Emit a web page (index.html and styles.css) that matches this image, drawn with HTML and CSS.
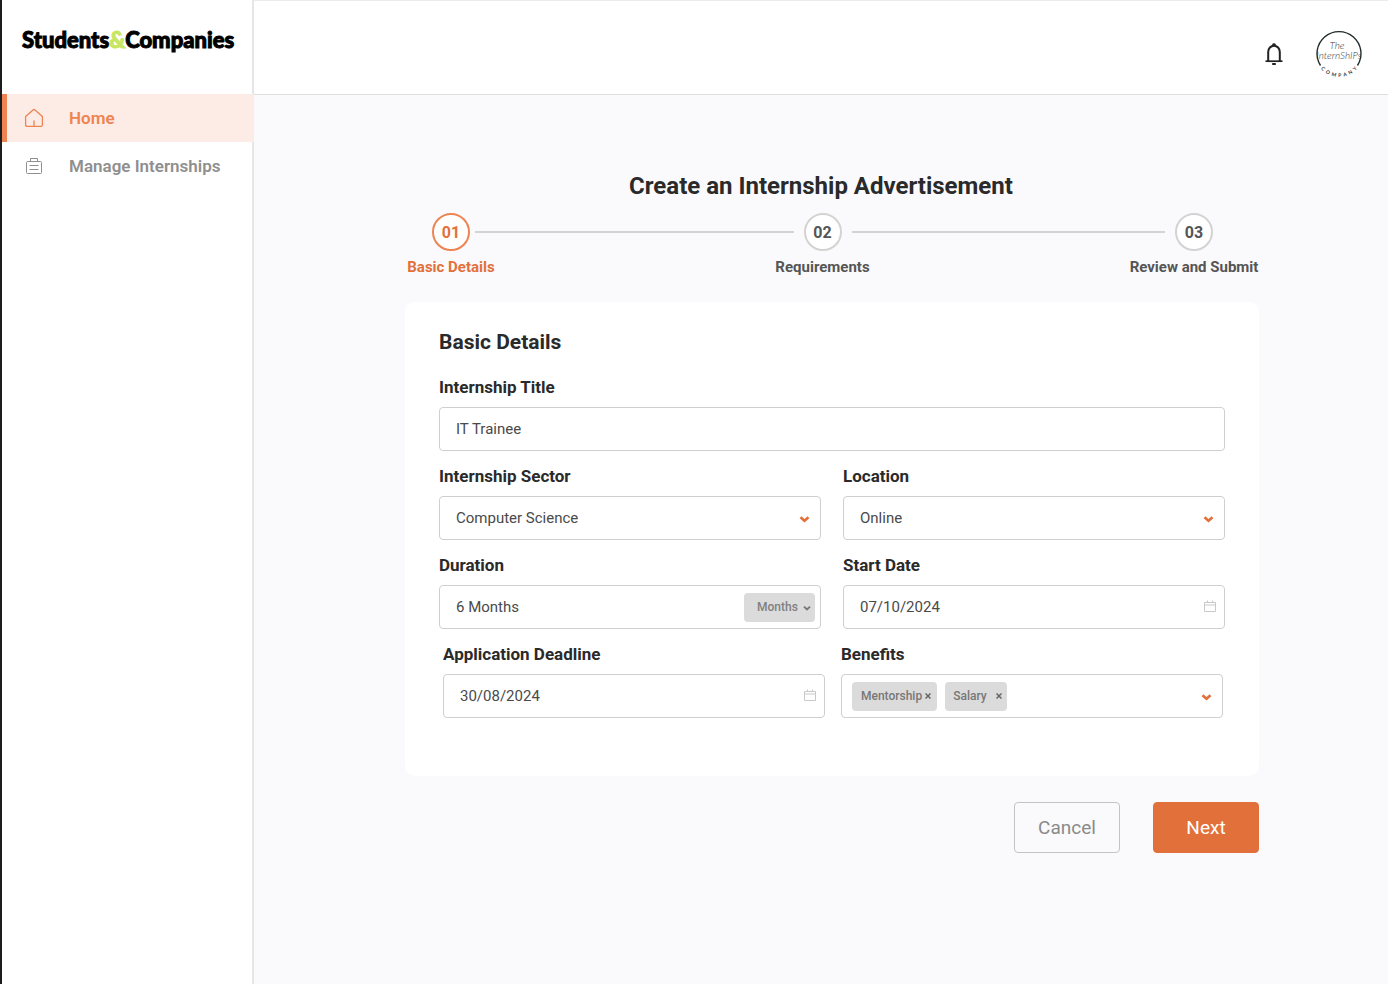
FILE: index.html
```html
<!DOCTYPE html>
<html lang="en">
<head>
<meta charset="utf-8">
<meta name="viewport" content="width=device-width, initial-scale=1">
<title>Create an Internship Advertisement</title>
<link rel="stylesheet" href="styles.css">
</head>
<body>
<div class="app">
  <aside class="sidebar">
    <a class="brand" href="#">Students<span class="brand-amp">&amp;</span>Companies</a>
    <nav class="nav">
      <a class="nav-item nav-item-active" href="#">
        <svg class="nav-icon" viewBox="0 0 20 20" fill="none" stroke="currentColor" stroke-width="1.3" stroke-linejoin="round" stroke-linecap="round"><path d="M1.600 8.600 9 1.900q1-.8 2 0l7.400 6.700v8.200q0 1.600-1.600 1.600H3.200q-1.600 0-1.600-1.600z"/><path d="M10 18v-5"/></svg>
        <span>Home</span>
      </a>
      <a class="nav-item" href="#">
        <svg class="nav-icon" viewBox="0 0 20 20" fill="none" stroke="currentColor" stroke-width="1"><rect x="2.5" y="5.5" width="15" height="12" rx="1"/><path d="M6.500 5.500v-3h7v3M5.500 9.500h9M5.500 13.500h9"/></svg>
        <span>Manage Internships</span>
      </a>
    </nav>
  </aside>
  <div class="page">
    <header class="topbar">
      <button class="icon-button" type="button" aria-label="Notifications">
        <svg width="20" height="24" viewBox="0 0 20 24" fill="none" stroke="#222" stroke-width="2"><path d="M4.200 19V10a5.800 6.300 0 0 1 11.600 0v9"/><path d="M1.500 19.200h17" stroke-width="1.700"/><path d="M8.200 22h3.600M8.800 3a1.300 1.300 0 0 1 2.400 0" stroke-width="1.800"/></svg>
      </button>
      <button class="icon-button" type="button" aria-label="The InternShIPs Company account">
        <svg class="avatar" width="50" height="50" viewBox="0 0 50 50">
          <path d="M6.500 36.500A22 22 0 1 1 43.500 36.500" fill="none" stroke="#222b2b" stroke-width="1.400"/>
          <path id="ring" d="M1 24A24 24 0 0 0 49 24" fill="none"/>
          <text class="avatar-script" x="23" y="20" text-anchor="middle">The</text>
          <text class="avatar-script" x="25" y="30" text-anchor="middle">InternShIPs</text>
          <text class="avatar-ring"><textPath href="#ring" startOffset="50%" text-anchor="middle">C&ensp;O&ensp;M&ensp;P&ensp;A&ensp;N&ensp;Y</textPath></text>
        </svg>
      </button>
    </header>
    <main class="main">
      <h1 class="title">Create an Internship Advertisement</h1>
      <form class="wizard">
        <ol class="steps">
          <li class="step step-active"><span class="step-number">01</span><span class="step-label">Basic Details</span></li>
          <li class="step-line" role="presentation"></li>
          <li class="step"><span class="step-number">02</span><span class="step-label">Requirements</span></li>
          <li class="step-line" role="presentation"></li>
          <li class="step"><span class="step-number">03</span><span class="step-label">Review and Submit</span></li>
        </ol>
        <section class="card">
          <h2 class="card-title">Basic Details</h2>
          <div class="row">
            <div class="field">
              <label class="label" for="title">Internship Title</label>
              <div class="control"><input class="input" id="title" type="text" value="IT Trainee"></div>
            </div>
          </div>
          <div class="row">
            <div class="field">
              <label class="label" for="sector">Internship Sector</label>
              <div class="control">
                <select class="input" id="sector"><option>Computer Science</option></select>
                <svg class="chevron" viewBox="0 0 10 8"><path d="M1 2.200 5 5.800 9 2.200"/></svg>
              </div>
            </div>
            <div class="field">
              <label class="label" for="location">Location</label>
              <div class="control">
                <select class="input" id="location"><option>Online</option></select>
                <svg class="chevron" viewBox="0 0 10 8"><path d="M1 2.200 5 5.800 9 2.200"/></svg>
              </div>
            </div>
          </div>
          <div class="row">
            <div class="field">
              <label class="label" for="duration">Duration</label>
              <div class="control">
                <input class="input" id="duration" type="text" value="6 Months">
                <div class="unit">
                  <select class="unit-select" aria-label="Duration unit"><option>Months</option></select>
                  <svg class="unit-chevron" viewBox="0 0 10 8"><path d="M1 2.200 5 5.800 9 2.200"/></svg>
                </div>
              </div>
            </div>
            <div class="field">
              <label class="label" for="start">Start Date</label>
              <div class="control">
                <input class="input" id="start" type="text" value="07/10/2024">
                <svg class="calendar" viewBox="0 0 12 12"><path d="M.5 2.500h11v9H.5zM.5 5h11M3.500.5v2M8.500.5v2"/></svg>
              </div>
            </div>
          </div>
          <div class="row row-inset">
            <div class="field">
              <label class="label" for="deadline">Application Deadline</label>
              <div class="control">
                <input class="input" id="deadline" type="text" value="30/08/2024">
                <svg class="calendar" viewBox="0 0 12 12"><path d="M.5 2.500h11v9H.5zM.5 5h11M3.500.5v2M8.500.5v2"/></svg>
              </div>
            </div>
            <div class="field">
              <span class="label" id="benefits">Benefits</span>
              <div class="control tags" role="group" aria-labelledby="benefits">
                <span class="tag">Mentorship<button class="tag-remove" type="button" aria-label="Remove Mentorship"><svg viewBox="0 0 6 6"><path d="M.5.5l5 5M5.500.5l-5 5"/></svg></button></span>
                <span class="tag tag-wide">Salary<button class="tag-remove" type="button" aria-label="Remove Salary"><svg viewBox="0 0 6 6"><path d="M.5.5l5 5M5.500.5l-5 5"/></svg></button></span>
                <button class="tags-toggle" type="button" aria-label="Show benefits"><svg class="chevron" viewBox="0 0 10 8"><path d="M1 2.200 5 5.800 9 2.200"/></svg></button>
              </div>
            </div>
          </div>
        </section>
        <div class="actions">
          <button class="button" type="button">Cancel</button>
          <button class="button button-primary" type="submit">Next</button>
        </div>
      </form>
    </main>
  </div>
</div>
</body>
</html>
```

FILE: styles.css
```css
* { box-sizing: border-box; }
body { margin: 0; font-family: Roboto, "Liberation Sans", sans-serif; color: #2a2a2a; background: #fafafc; }
button, input, select { font: inherit; color: inherit; }
button { padding: 0; border: 0; background: none; cursor: pointer; }

.app { display: flex; min-height: 100vh; }
.sidebar { flex: 0 0 254px; background: #fff; border-left: 2px solid #1c1c1f; border-right: 2px solid #e6e6e8; }
.brand { display: flex; height: 94px; padding: 25px 0 0 20px; font: 900 22px/30px Lato, sans-serif; color: #000; text-decoration: none; white-space: nowrap; -webkit-text-stroke: 1px currentColor; }
.brand-amp { color: #c8e661; }
.nav-item { display: flex; align-items: center; gap: 25px; height: 48px; padding-left: 22px; font-size: 17px; font-weight: 600; color: #8f8f8f; text-decoration: none; white-space: nowrap; }
.nav-item-active { padding-left: 17px; border-left: 5px solid #ee8451; margin-right: -2px; background: #fcece5; color: #ee8451; }
.nav-icon { width: 20px; height: 20px; }

.page { flex: 1; min-width: 0; }
.topbar { display: flex; justify-content: flex-end; align-items: center; gap: 30px; height: 95px; padding: 13px 24px 0 0; background: #fff; border-top: 1px solid #ececee; border-bottom: 1px solid #dedee0; }
.icon-button { display: flex; }
.avatar { overflow: visible; }
.avatar-script { font: italic 300 10px Lato, sans-serif; fill: #333b3b; }
.avatar-ring { font: 700 5px Lato, sans-serif; fill: #333b3b; }

.main { padding: 75px 0 40px; }
.title { margin: 0; font-size: 24px; line-height: 32px; font-weight: 700; text-align: center; }
.wizard { margin: 11px 129px 0 151px; }

.steps { display: flex; margin: 0; padding: 0 46px 0 27px; list-style: none; }
.step { display: flex; flex-direction: column; align-items: center; gap: 6px; width: 38px; color: #555; font-weight: 700; white-space: nowrap; }
.step-active { color: #e2703a; }
.step-number { display: flex; align-items: center; justify-content: center; flex: 0 0 38px; width: 38px; border: 2px solid #d3d3d3; border-radius: 50%; background: #fff; font-size: 16px; }
.step-active .step-number { border-color: #ee8451; }
.step-label { font-size: 15px; line-height: 20px; }
.step-line { flex: 1 1 0; height: 2px; margin: 18px 10px 0; background: #d3d3d3; }
.step-active + .step-line { flex-basis: 5px; margin-left: 5px; }

.card { margin-top: 25px; padding: 26px 34px 58px; border-radius: 10px; background: #fff; }
.card-title { margin: 0; font-size: 21px; line-height: 28px; font-weight: 700; }
.row { display: flex; gap: 22px; margin-top: 15px; }
.card-title + .row { margin-top: 21px; }
.row-inset { gap: 16px; padding: 0 2px 0 4px; }
.field { flex: 1; min-width: 0; }
.label { display: block; margin-bottom: 10px; font-size: 17px; line-height: 20px; font-weight: 700; }
.control { position: relative; display: flex; height: 44px; border: 1px solid #cfcfcf; border-radius: 4px; background: #fff; }
.input { flex: 1; min-width: 0; padding: 0 16px; border: 0; border-radius: 4px; background: none; color: #4a4a4a; font-size: 15px; appearance: none; }
.chevron, .unit-chevron { fill: none; stroke: #e2703a; stroke-width: 2.6; }
.chevron { position: absolute; right: 10px; top: 18px; width: 11px; height: 8px; pointer-events: none; }
.calendar { position: absolute; right: 8px; top: 14px; width: 12px; height: 12px; fill: none; stroke: #c9c9c9; pointer-events: none; }
.unit { position: relative; display: flex; align-self: center; width: 71px; height: 29px; margin-right: 5px; }
.unit-select { width: 100%; padding: 0 0 0 13px; border: 0; border-radius: 4px; background: #dbdbdb; color: #808080; font-size: 12px; font-weight: 500; appearance: none; }
.unit-chevron { position: absolute; right: 4px; top: 12px; width: 8px; height: 6px; stroke: #777; pointer-events: none; }
.tags { align-items: center; gap: 8px; padding-left: 10px; }
.tag { display: flex; align-items: center; gap: 3px; height: 29px; padding: 0 6px 0 9px; border-radius: 4px; background: #dbdbdb; color: #777; font-size: 12px; font-weight: 500; }
.tag-wide { gap: 9px; padding: 0 5px 0 8px; }
.tag-remove { display: flex; }
.tag-remove svg { width: 6px; height: 6px; stroke: #666; stroke-width: 1.5; }
.tags-toggle { align-self: stretch; flex: 1; }

.actions { display: flex; justify-content: flex-end; gap: 33px; margin-top: 26px; }
.button { width: 106px; height: 51px; border: 1px solid #c4c4c6; border-radius: 4px; font-size: 19px; color: #8a8a8a; }
.button-primary { border-color: #e2703a; background: #e2703a; color: #fff; }
```
